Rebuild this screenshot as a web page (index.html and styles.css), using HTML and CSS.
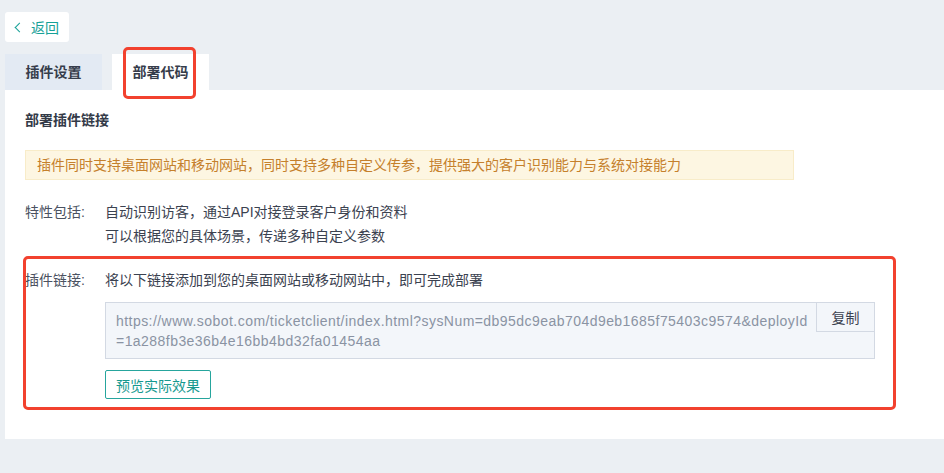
FILE: index.html
```html
<!DOCTYPE html>
<html>
<head>
  <meta charset="utf-8">
  <title>部署代码</title>
  <link rel="stylesheet" href="styles.css">
</head>
<body>

  <div class="page">
    <a class="back" href="#"><span class="back-arrow"></span>返回</a>

    <div class="tabs">
      <div class="tab">插件设置</div>
      <div class="tab active">部署代码<span class="mark mark-tab"></span></div>
    </div>

    <div class="card">
      <h3>部署插件链接</h3>

      <div class="notice">插件同时支持桌面网站和移动网站，同时支持多种自定义传参，提供强大的客户识别能力与系统对接能力</div>

      <div class="row">
        <label>特性包括:</label>
        <div class="row-body">
          <p>自动识别访客，通过API对接登录客户身份和资料</p>
          <p>可以根据您的具体场景，传递多种自定义参数</p>
        </div>
      </div>

      <div class="row link-row">
        <span class="mark mark-link"></span>
        <label>插件链接:</label>
        <div class="row-body">
          <p>将以下链接添加到您的桌面网站或移动网站中，即可完成部署</p>
          <div class="link-box">
            <div class="link-text">https://www.sobot.com/ticketclient/index.html?sysNum=db95dc9eab704d9eb1685f75403c9574&amp;deployId<br>=1a288fb3e36b4e16bb4bd32fa01454aa</div>
            <button class="copy">复制</button>
          </div>
          <button class="preview">预览实际效果</button>
        </div>
      </div>
    </div>
  </div>

</body>
</html>
```

FILE: styles.css
```css
body {
  margin: 0;
  background: #ebeff3;
  font-family: "Liberation Sans", "Noto Sans CJK SC", sans-serif;
  font-size: 14px;
  color: #3b4250;
}
p {
  margin: 0;
}
.page {
  padding: 12px 0 0 5px;
}
.back {
  display: flex;
  align-items: center;
  width: 56px;
  height: 30px;
  padding-left: 8px;
  background: white;
  border-radius: 3px;
  color: #17a197;
  text-decoration: none;
}
.back-arrow {
  width: 6px;
  height: 6px;
  border-left: 1.5px solid #17a197;
  border-bottom: 1.5px solid #17a197;
  transform: rotate(45deg);
  margin: 0 8px 0 3px;
}
.tabs {
  display: flex;
  gap: 10px;
  margin-top: 12px;
}
.tab {
  position: relative;
  width: 97px;
  height: 36px;
  line-height: 36px;
  text-align: center;
  font-weight: bold;
  color: #363d4b;
  background: #e3eaf3;
}
.tab.active {
  background: white;
}
.mark {
  position: absolute;
  border: 3px solid #f2412e;
  border-radius: 5px;
}
.mark-tab {
  left: 11px;
  top: -7px;
  width: 67px;
  height: 46px;
}
.card {
  background: white;
  height: 349px;
  box-sizing: border-box;
  padding: 20px 20px 0 20px;
}
h3 {
  margin: 0;
  font-size: 14px;
  line-height: 20px;
  color: #333a48;
}
.notice {
  width: 756px;
  margin-top: 20px;
  padding: 0 0 0 11px;
  height: 28px;
  line-height: 28px;
  background: #fdf6e2;
  border: 1px solid #f8ecc9;
  color: #c5802c;
}
.row {
  display: flex;
  margin-top: 20px;
  line-height: 24px;
}
.row label {
  width: 80px;
  flex-shrink: 0;
  color: #4b5261;
}
.link-row {
  position: relative;
}
.mark-link {
  left: -2px;
  top: -12px;
  width: 867px;
  bottom: -11px;
}
.link-box {
  position: relative;
  width: 770px;
  box-sizing: border-box;
  margin-top: 10px;
  height: 57px;
  padding: 8px 0 0 10px;
  background: #f3f6fa;
  border: 1px solid #d3d9e3;
}
.link-text {
  line-height: 20px;
  color: #8a93a3;
  letter-spacing: 0.45px;
  white-space: nowrap;
}
.copy {
  position: absolute;
  top: -1px;
  right: -1px;
  width: 59px;
  height: 30px;
  border: 1px solid #d3d9e3;
  background: #f3f6fa;
  font-family: inherit;
  font-size: 14px;
  color: #3b4250;
}
.preview {
  display: block;
  margin-top: 11px;
  width: 106px;
  height: 29px;
  padding: 0;
  background: white;
  border: 1px solid #26a59d;
  border-radius: 2px;
  color: #16998f;
  font-family: inherit;
  font-size: 14px;
}
```
